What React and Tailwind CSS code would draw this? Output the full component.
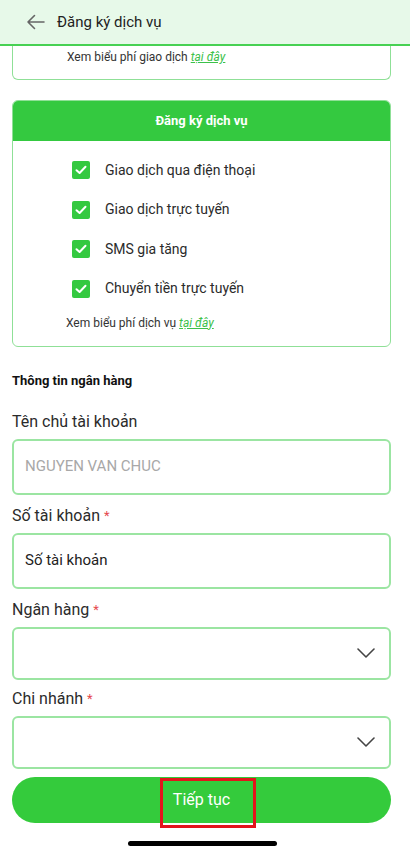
import React from 'react';

const services = [
  'Giao dịch qua điện thoại',
  'Giao dịch trực tuyến',
  'SMS gia tăng',
  'Chuyển tiền trực tuyến',
];

function CheckBox() {
  return (
    <span className="w-[18px] h-[18px] rounded-[2px] bg-[#34c940] flex items-center justify-center shrink-0">
      <svg width="12" height="10" viewBox="0 0 12 10" fill="none">
        <path d="M1.5 5.2 L4.6 8 L10.5 1.8" stroke="white" strokeWidth="2" strokeLinecap="round" strokeLinejoin="round" />
      </svg>
    </span>
  );
}

function Chevron() {
  return (
    <svg width="18" height="10" viewBox="0 0 18 10" fill="none">
      <path d="M1 1 L9 9 L17 1" stroke="#444" strokeWidth="1.6" strokeLinecap="round" strokeLinejoin="round" />
    </svg>
  );
}

function Label({ children, required }) {
  return (
    <div className="text-[16px] leading-6 text-[#2b2b2b]">
      {children}
      {required && <span className="text-[#e5484d] text-[13px] align-top ml-1">*</span>}
    </div>
  );
}

export default function App() {
  return (
    <div className="w-[410px] h-[854px] bg-white overflow-hidden relative font-['Roboto','Liberation_Sans',sans-serif]">
      {/* header */}
      <div className="h-[46px] bg-[#e7f9e9] border-b-2 border-[#47d153] flex items-center pl-[26px] relative z-10">
        <svg width="19" height="16" viewBox="0 0 19 16" fill="none">
          <path d="M18 8 H2 M8.5 1.5 L2 8 L8.5 14.5" stroke="#666" strokeWidth="1.6" strokeLinecap="round" strokeLinejoin="round" />
        </svg>
        <span className="ml-[12px] text-[15px] text-[#222]">Đăng ký dịch vụ</span>
      </div>

      <div className="pl-3 pr-[19px] -mt-[2px]">
        {/* fee card (scrolled) */}
        <div className="border border-t-0 border-[#8fe097] rounded-b-md pt-[6px] pb-[15px] pl-[54px] text-[12px] leading-[14px] text-[#333]">
          Xem biểu phí giao dịch{' '}
          <span className="italic underline text-[#3cc14a]">tại đây</span>
        </div>

        {/* service card */}
        <div className="mt-5 border border-[#8fe097] rounded-md overflow-hidden">
          <div className="h-[40px] bg-[#34c940] flex items-center justify-center text-white font-bold text-[13px]">
            Đăng ký dịch vụ
          </div>
          <div className="pt-[20px] pl-[59px] flex flex-col gap-[21.5px]">
            {services.map((s) => (
              <div key={s} className="flex items-center gap-[15px] h-[18px]">
                <CheckBox />
                <span className="text-[14px] text-[#2b2b2b]">{s}</span>
              </div>
            ))}
          </div>
          <div className="pt-[18px] pb-[16px] pl-[53px] text-[12px] leading-[14px] text-[#333]">
            Xem biểu phí dịch vụ{' '}
            <span className="italic underline text-[#3cc14a]">tại đây</span>
          </div>
        </div>

        <div className="mt-[26px] text-[13px] font-bold text-[#111] leading-4">Thông tin ngân hàng</div>

        <div className="mt-[21px]">
          <Label>Tên chủ tài khoản</Label>
          <div className="mt-[5px] h-[56px] border-2 border-[#9be5a2] rounded-md flex items-center px-[11px] text-[15px] text-[#a8a8a8]">
            NGUYEN VAN CHUC
          </div>
        </div>

        <div className="mt-[9px]">
          <Label required>Số tài khoản</Label>
          <div className="mt-[5px] h-[56px] border-2 border-[#9be5a2] rounded-md flex items-center px-[11px] text-[15px] text-[#222]">
            Số tài khoản
          </div>
        </div>

        <div className="mt-[9px]">
          <Label required>Ngân hàng</Label>
          <div className="mt-[5px] h-[53px] border-2 border-[#9be5a2] rounded-md flex items-center justify-end pr-[14px]">
            <Chevron />
          </div>
        </div>

        <div className="mt-[7px]">
          <Label required>Chi nhánh</Label>
          <div className="mt-[5px] h-[53px] border-2 border-[#9be5a2] rounded-md flex items-center justify-end pr-[14px]">
            <Chevron />
          </div>
        </div>

        <div className="mt-[8px] h-[46px] rounded-full bg-[#34cb3c] flex items-center justify-center relative">
          <span className="text-white text-[16px]">Tiếp tục</span>
          <div className="absolute left-[148px] top-[1px] w-[96px] h-[50px] border-[3px] border-[#e3141c]"></div>
        </div>
      </div>

      <div className="absolute left-[128px] top-[841px] w-[149px] h-[5px] rounded-full bg-black"></div>
    </div>
  );
}
